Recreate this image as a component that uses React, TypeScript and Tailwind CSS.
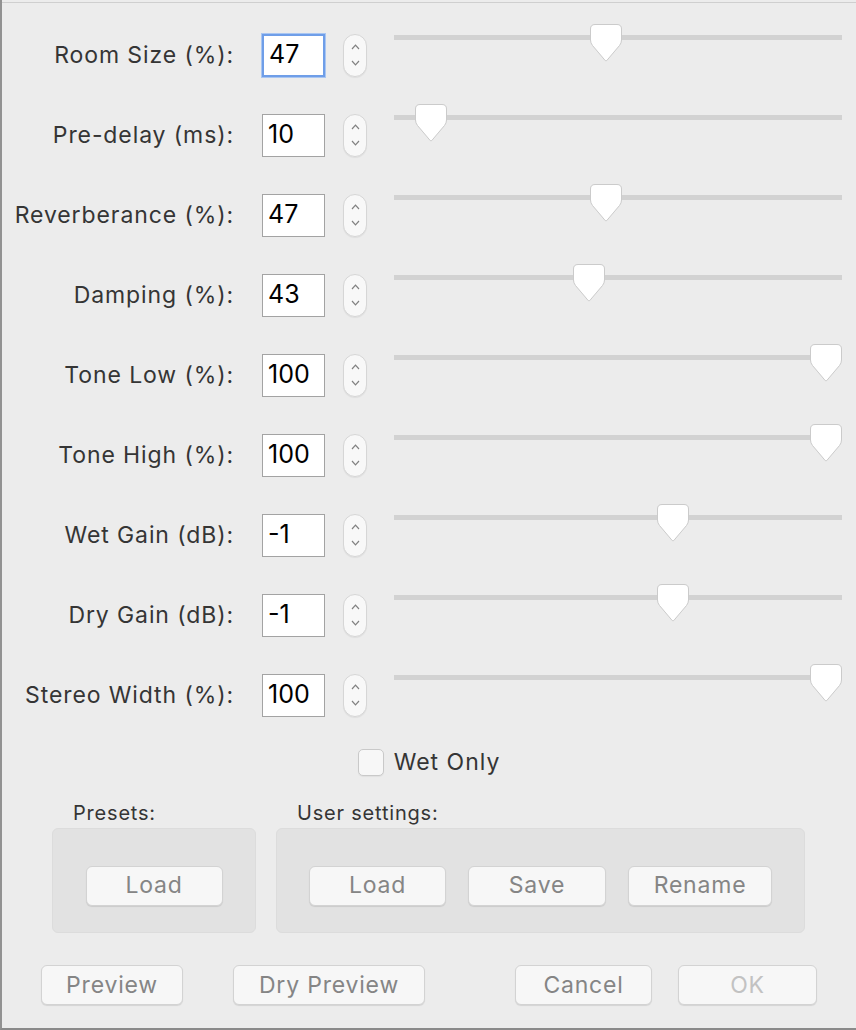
import React from "react";

interface Param {
  label: string;
  value: string;
  pos: number; // 0..100 along the slider
}

const params: Param[] = [
  { label: "Room Size (%):", value: "47", pos: 47 },
  { label: "Pre-delay (ms):", value: "10", pos: 5 },
  { label: "Reverberance (%):", value: "47", pos: 47 },
  { label: "Damping (%):", value: "43", pos: 43 },
  { label: "Tone Low (%):", value: "100", pos: 100 },
  { label: "Tone High (%):", value: "100", pos: 100 },
  { label: "Wet Gain (dB):", value: "-1", pos: 63.3 },
  { label: "Dry Gain (dB):", value: "-1", pos: 63.3 },
  { label: "Stereo Width (%):", value: "100", pos: 100 },
];

const font = { fontFamily: "Inter, 'Noto Sans', sans-serif" };

const Stepper = () => (
  <div className="ml-[18px] w-[24px] h-[43px] rounded-full border border-[#d6d6d6] bg-[#f8f8f8] shadow-[0_1px_1px_rgba(0,0,0,0.06)] flex flex-col items-center justify-center gap-[10px]">
    <svg width="9" height="6" viewBox="0 0 9 6">
      <path d="M1 5 L4.5 1.2 L8 5" fill="none" stroke="#808080" strokeWidth="1.2" />
    </svg>
    <svg width="9" height="6" viewBox="0 0 9 6">
      <path d="M1 1 L4.5 4.8 L8 1" fill="none" stroke="#808080" strokeWidth="1.2" />
    </svg>
  </div>
);

const Thumb = () => (
  <svg width="34" height="40" viewBox="0 0 34 40">
    <path
      d="M6 1.5 H28 Q32.5 1.5 32.5 6 V17 Q32.5 20 30.5 22.5 L17.8 37.5 Q17 38.3 16.2 37.5 L3.5 22.5 Q1.5 20 1.5 17 V6 Q1.5 1.5 6 1.5 Z"
      fill="#ffffff"
      stroke="#cbcbcb"
      strokeWidth="1"
    />
  </svg>
);

const Slider = ({ pos }: { pos: number }) => {
  // thumb center runs from 16px to 432px inside the 448px track box
  const left = 16 + (pos / 100) * 416 - 17;
  return (
    <div className="ml-[27px] w-[448px] self-stretch relative">
      <div className="absolute left-0 right-0 top-[20px] h-[5px] bg-[#d2d2d2]" />
      <div className="absolute top-[8px]" style={{ left }}>
        <Thumb />
      </div>
    </div>
  );
};

const Btn = ({ children, w, muted }: { children: React.ReactNode; w: string; muted?: boolean }) => (
  <button
    className={`${w} h-[40px] rounded-[6px] border border-[#d3d3d3] bg-[#f7f7f7] shadow-[0_1px_1px_rgba(0,0,0,0.10)] text-[23px] tracking-[0.8px] ${
      muted ? "text-[#c2c2c2]" : "text-[#858585]"
    }`}
    style={font}
  >
    {children}
  </button>
);

export default function App() {
  return (
    <div className="w-[856px] h-[1030px] bg-[#ececec] border-l-2 border-l-[#929292] border-b-2 border-b-[#8a8a8a] flex flex-col" style={font}>
      <div className="h-[3px] shrink-0 border-b border-b-[#cfcfcf]" />
      <div className="pt-[12px] flex flex-col">
        {params.map((p, i) => (
          <div key={p.label} className="h-[80px] flex items-center">
            <div className="w-[232px] text-right text-[23px] tracking-[0.9px] text-[#353535] whitespace-nowrap">{p.label}</div>
            <div
              className={`ml-[28px] w-[63px] h-[43px] bg-white flex items-center pl-[5px] text-[25px] text-black ${
                i === 0
                  ? "border-2 border-[#6f9ee8] shadow-[0_0_0_1px_#a9c6f2]"
                  : "border border-[#a3a3a3]"
              }`}
            >
              {p.value}
            </div>
            <Stepper />
            <Slider pos={p.pos} />
          </div>
        ))}
      </div>

      <div className="h-[54px] flex items-center justify-center gap-[10px]">
        <div className="w-[26px] h-[27px] rounded-[5px] border border-[#c9c9c9] bg-[#f7f7f7] shadow-[0_1px_1px_rgba(0,0,0,0.05)]" />
        <span className="text-[23px] tracking-[1px] text-[#353535]">Wet Only</span>
      </div>

      <div className="mt-[13px] pl-[50px] flex gap-[20px]">
        <div className="w-[204px] flex flex-col">
          <div className="pl-[21px] h-[22px] leading-[22px] text-[20px] tracking-[0.8px] text-[#353535]">Presets:</div>
          <div className="mt-[4px] h-[105px] rounded-[6px] bg-[#e2e2e2] border border-[#dcdcdc] flex items-center justify-center pt-[10px]">
            <Btn w="w-[137px]">Load</Btn>
          </div>
        </div>
        <div className="w-[529px] flex flex-col">
          <div className="pl-[21px] h-[22px] leading-[22px] text-[20px] tracking-[0.8px] text-[#353535]">User settings:</div>
          <div className="mt-[4px] h-[105px] rounded-[6px] bg-[#e2e2e2] border border-[#dcdcdc] flex items-center justify-center gap-[22px] pt-[10px]">
            <Btn w="w-[137px]">Load</Btn>
            <Btn w="w-[138px]">Save</Btn>
            <Btn w="w-[144px]">Rename</Btn>
          </div>
        </div>
      </div>

      <div className="mt-[32px] flex">
        <div className="ml-[39px]">
          <Btn w="w-[142px]">Preview</Btn>
        </div>
        <div className="ml-[50px]">
          <Btn w="w-[192px]">Dry Preview</Btn>
        </div>
        <div className="ml-[90px]">
          <Btn w="w-[137px]">Cancel</Btn>
        </div>
        <div className="ml-[26px]">
          <Btn w="w-[139px]" muted>
            OK
          </Btn>
        </div>
      </div>
    </div>
  );
}
